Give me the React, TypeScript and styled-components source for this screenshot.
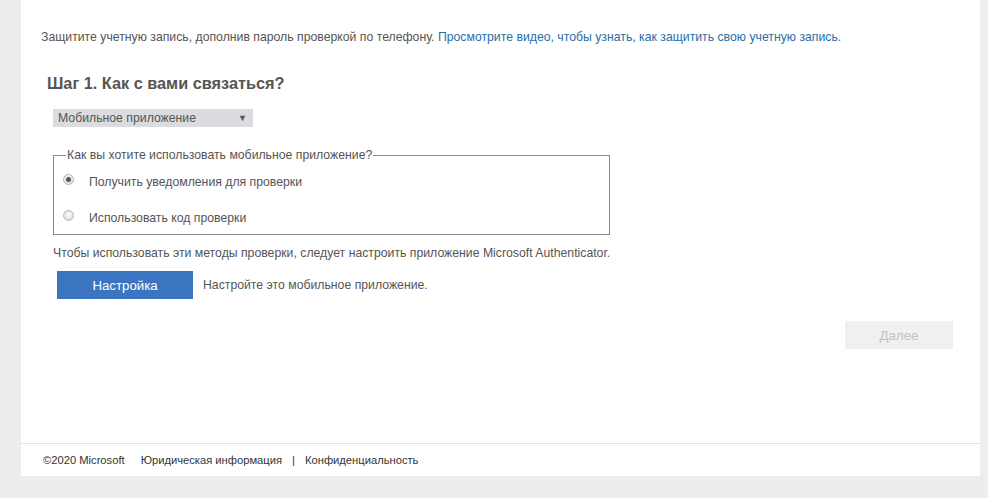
import * as React from 'react'
import styled, { createGlobalStyle } from 'styled-components'

const colors = {
  page: '#ededed',
  white: '#ffffff',
  text: '#555555',
  link: '#2a6ea6',
  blue: '#3b74c0',
  border: '#8a8a8a',
}

const GlobalStyle = createGlobalStyle`
  html, body {
    margin: 0;
    padding: 0;
    background: ${colors.page};
    font-family: 'Liberation Sans', Arial, sans-serif;
    color: ${colors.text};
  }
`

export default () => (
  <>
    <GlobalStyle />
    <Card>
      <Content>
        <Intro>
          Защитите учетную запись, дополнив пароль проверкой по телефону.{' '}
          <Link href='#'>Просмотрите видео, чтобы узнать, как защитить свою учетную запись.</Link>
        </Intro>
        <Step>
          <StepTitle>Шаг 1. Как с вами связаться?</StepTitle>
          <Select>
            <span>Мобильное приложение</span>
            <Arrow>▼</Arrow>
          </Select>
          <Options>
            <Legend>Как вы хотите использовать мобильное приложение?</Legend>
            <OptionRow>
              <Radio checked />
              <OptionLabel>Получить уведомления для проверки</OptionLabel>
            </OptionRow>
            <OptionRow>
              <Radio />
              <OptionLabel>Использовать код проверки</OptionLabel>
            </OptionRow>
          </Options>
          <Hint>Чтобы использовать эти методы проверки, следует настроить приложение Microsoft Authenticator.</Hint>
          <SetupRow>
            <SetupButton>Настройка</SetupButton>
            <SetupText>Настройте это мобильное приложение.</SetupText>
          </SetupRow>
        </Step>
        <Actions>
          <NextButton disabled>Далее</NextButton>
        </Actions>
      </Content>
      <Footer>
        <FooterItem>©2020 Microsoft</FooterItem>
        <FooterLinks>
          <FooterItem>Юридическая информация</FooterItem>
          <Divider>|</Divider>
          <FooterItem>Конфиденциальность</FooterItem>
        </FooterLinks>
      </Footer>
    </Card>
  </>
)

const Card = styled.div`
  margin-left: 21px;
  width: 959px;
  background: ${colors.white};
  display: flex;
  flex-direction: column;
`

const Content = styled.div`
  height: 444px;
  padding: 30px 27px 0 20px;
  box-sizing: border-box;
  border-bottom: 1px solid #e3e3e3;
  display: flex;
  flex-direction: column;
`

const Intro = styled.p`
  margin: 0;
  font-size: 12.25px;
  line-height: 14px;
  color: ${colors.text};
`

const Link = styled.a`
  color: ${colors.link};
  text-decoration: none;
`

const Step = styled.div`
  padding-left: 6px;
  margin-top: 29px;
  display: flex;
  flex-direction: column;
  align-items: flex-start;
`

const StepTitle = styled.h2`
  margin: 0;
  font-size: 16.3px;
  line-height: 20px;
  font-weight: bold;
  color: ${colors.text};
`

const Select = styled.div`
  margin: 16px 0 0 6px;
  width: 200px;
  height: 18px;
  box-sizing: border-box;
  padding: 0 6px 0 5px;
  background: #dadcdf;
  font-size: 12.25px;
  line-height: 18px;
  color: ${colors.text};
  display: flex;
  justify-content: space-between;
  align-items: center;
`

const Arrow = styled.span`
  font-size: 9px;
  color: #555;
`

const Options = styled.fieldset`
  margin: 21px 0 0 6px;
  width: 557px;
  box-sizing: border-box;
  padding: 9px 0 5px 9px;
  border: 1px solid ${colors.border};
  display: flex;
  flex-direction: column;
  gap: 14px;
`

const Legend = styled.legend`
  margin-left: 3px;
  padding: 0 1px;
  font-size: 12.25px;
  line-height: 14px;
  color: ${colors.text};
`

const OptionRow = styled.label`
  height: 22px;
  display: flex;
  align-items: center;
  gap: 15px;
`

const Radio = styled.span<{ checked?: boolean }>`
  width: 11px;
  height: 11px;
  margin-bottom: 6px;
  border-radius: 50%;
  box-sizing: border-box;
  border: 1px solid #b5b5b5;
  background: radial-gradient(circle at 50% 40%, #fbfbfb 0%, #d8d8d8 100%);
  position: relative;
  &::after {
    content: '';
    display: ${(p) => (p.checked ? 'block' : 'none')};
    position: absolute;
    left: 2px;
    top: 2px;
    width: 5px;
    height: 5px;
    border-radius: 50%;
    background: #555;
  }
`

const OptionLabel = styled.span`
  font-size: 12.25px;
  line-height: 14px;
  color: ${colors.text};
`

const Hint = styled.p`
  margin: 11px 0 0 6px;
  font-size: 12.25px;
  line-height: 14px;
  color: ${colors.text};
`

const SetupRow = styled.div`
  margin: 11px 0 0 10px;
  display: flex;
  align-items: center;
  gap: 10px;
`

const SetupButton = styled.button`
  width: 136px;
  height: 28px;
  border: none;
  background: ${colors.blue};
  color: ${colors.white};
  font-family: 'Liberation Sans', Arial, sans-serif;
  font-size: 13.25px;
  padding: 0;
`

const SetupText = styled.span`
  font-size: 12.25px;
  color: ${colors.text};
`

const Actions = styled.div`
  margin-top: 22px;
  display: flex;
  justify-content: flex-end;
`

const NextButton = styled.button`
  width: 108px;
  height: 28px;
  border: none;
  background: #f0f0f0;
  color: #c2c2c2;
  font-family: 'Liberation Sans', Arial, sans-serif;
  font-size: 13.25px;
  padding: 0;
`

const Footer = styled.footer`
  height: 32px;
  padding-left: 22px;
  display: flex;
  align-items: center;
  gap: 16px;
  font-size: 11.2px;
  color: #333;
`

const FooterLinks = styled.div`
  display: flex;
  gap: 10px;
`

const FooterItem = styled.span``

const Divider = styled.span``
